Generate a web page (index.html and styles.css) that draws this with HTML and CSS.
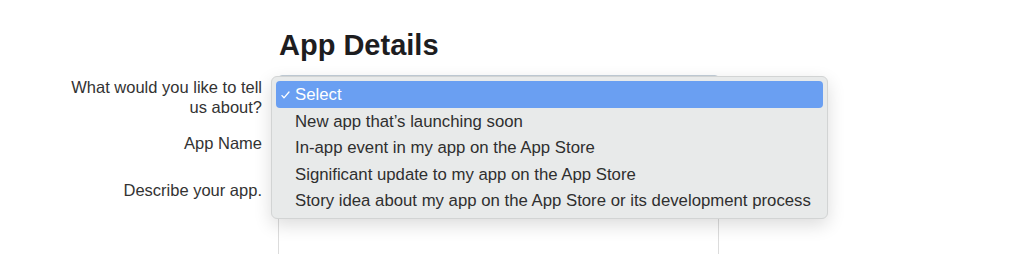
FILE: index.html
```html
<!DOCTYPE html>
<html lang="en">
<head>
    <meta charset="UTF-8">
    <meta name="viewport" content="width=device-width, initial-scale=1.0">
    <title>App Details</title>
    <link rel="stylesheet" href="styles.css">
</head>
<body>

<section class="app-form">
    <div class="form-row">
        <div></div>
        <h1>App Details</h1>
    </div>

    <div class="form-row">
        <label for="topic">What would you like to tell us about?</label>
        <div class="field">
            <div class="select-box" id="topic"></div>

            <!-- Open select menu -->
            <ul class="select-menu">
                <li class="selected">
                    <svg class="check" width="9" height="8" viewBox="0 0 9 8">
                        <polyline points="1,4.6 3,6.8 8,1" fill="none" stroke="#ffffff" stroke-width="1.3" stroke-linecap="round" stroke-linejoin="round"/>
                    </svg>
                    Select
                </li>
                <li>New app that’s launching soon</li>
                <li>In-app event in my app on the App Store</li>
                <li>Significant update to my app on the App Store</li>
                <li>Story idea about my app on the App Store or its development process</li>
            </ul>
        </div>
    </div>

    <div class="form-row row-name">
        <label for="appName">App Name</label>
        <div class="field">
            <div class="text-input" id="appName"></div>
        </div>
    </div>

    <div class="form-row row-describe">
        <label for="appDescription">Describe your app.</label>
        <div class="field">
            <div class="text-area" id="appDescription"></div>
        </div>
    </div>
</section>

</body>
</html>
```

FILE: styles.css
```css
body {
    font-family: "Liberation Sans", Arial, sans-serif;
    background-color: #ffffff;
    color: #333333;
    margin: 0;
    padding: 0;
    overflow: hidden;
}
.app-form {
    padding-top: 28px;
    padding-left: 52px;
}
.form-row {
    display: grid;
    grid-template-columns: 210px 441px;
    column-gap: 16px;
    align-items: start;
}
h1 {
    margin: 0 0 13px;
    font-size: 29px;
    line-height: 34px;
    font-weight: bold;
    color: #1d1d1f;
    padding-left: 1px;
}
.form-row label {
    text-align: right;
    font-size: 16.5px;
    line-height: 20px;
    padding-top: 2px;
    color: #333333;
}
.field {
    position: relative;
}
.select-box {
    height: 30px;
    box-sizing: border-box;
    border: 1px solid #c3ced8;
    border-radius: 4px;
}
.row-name {
    margin-top: 14px;
}
.text-input {
    height: 30px;
    box-sizing: border-box;
    border: 1px solid #dcdcdc;
}
.row-describe {
    margin-top: 17px;
}
.text-area {
    height: 100px;
    box-sizing: border-box;
    border: 1px solid #dcdcdc;
}
/* Open dropdown list */
.select-menu {
    position: absolute;
    top: 1px;
    left: -7px;
    width: 557px;
    box-sizing: border-box;
    margin: 0;
    padding: 4px;
    list-style: none;
    background-color: #e8eaea;
    border: 1px solid #d2d4d4;
    border-radius: 6px;
    box-shadow: 0 6px 18px rgba(0, 0, 0, 0.14);
    z-index: 10;
}
.select-menu li {
    position: relative;
    padding: 2px 0 0 19px;
    font-size: 16.75px;
    line-height: 24.5px;
    color: #2f2f2f;
    border-radius: 4px;
    white-space: nowrap;
}
.select-menu li.selected {
    background-color: #6a9ff2;
    color: #ffffff;
}
.check {
    position: absolute;
    left: 5px;
    top: 10px;
}
```
